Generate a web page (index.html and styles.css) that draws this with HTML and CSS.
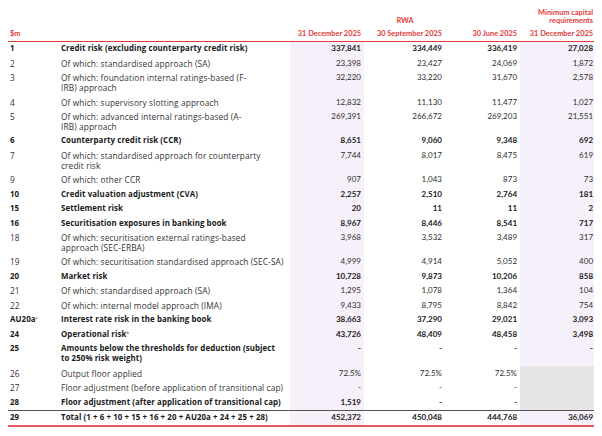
FILE: index.html
```html
<!DOCTYPE html>
<html>
<head>
<meta charset="utf-8">
<link rel="stylesheet" href="styles.css">
</head>
<body>
<table class="rwa">
  <colgroup>
    <col class="c-num"><col class="c-desc"><col class="c-v1"><col class="c-v2"><col class="c-v3"><col class="c-v4">
  </colgroup>
  <thead>
    <tr class="h1">
      <th></th><th></th>
      <th colspan="3" class="center">RWA</th>
      <th class="right">Minimum capital<br>requirements</th>
    </tr>
    <tr class="h2">
      <th class="left">$m</th><th></th>
      <th class="right">31 December 2025</th>
      <th class="right">30 September 2025</th>
      <th class="right">30 June 2025</th>
      <th class="right">31 December 2025</th>
    </tr>
  </thead>
  <tbody>
    <tr class="b"><td>1</td><td>Credit risk (excluding counterparty credit risk)</td><td class="v s">337,841</td><td class="v">334,449</td><td class="v">336,419</td><td class="v s">27,028</td></tr>
    <tr><td>2</td><td>Of which: standardised approach (SA)</td><td class="v s">23,398</td><td class="v">23,427</td><td class="v">24,069</td><td class="v s">1,872</td></tr>
    <tr><td>3</td><td>Of which: foundation internal ratings-based (F-<br>IRB) approach</td><td class="v s">32,220</td><td class="v">33,220</td><td class="v">31,670</td><td class="v s">2,578</td></tr>
    <tr><td>4</td><td>Of which: supervisory slotting approach</td><td class="v s">12,832</td><td class="v">11,130</td><td class="v">11,477</td><td class="v s">1,027</td></tr>
    <tr><td>5</td><td>Of which: advanced internal ratings-based (A-<br>IRB) approach</td><td class="v s">269,391</td><td class="v">266,672</td><td class="v">269,203</td><td class="v s">21,551</td></tr>
    <tr class="b"><td>6</td><td>Counterparty credit risk (CCR)</td><td class="v s">8,651</td><td class="v">9,060</td><td class="v">9,348</td><td class="v s">692</td></tr>
    <tr><td>7</td><td>Of which: standardised approach for counterparty<br>credit risk</td><td class="v s">7,744</td><td class="v">8,017</td><td class="v">8,475</td><td class="v s">619</td></tr>
    <tr><td>9</td><td>Of which: other CCR</td><td class="v s">907</td><td class="v">1,043</td><td class="v">873</td><td class="v s">73</td></tr>
    <tr class="b"><td>10</td><td>Credit valuation adjustment (CVA)</td><td class="v s">2,257</td><td class="v">2,510</td><td class="v">2,764</td><td class="v s">181</td></tr>
    <tr class="b"><td>15</td><td>Settlement risk</td><td class="v s">20</td><td class="v">11</td><td class="v">11</td><td class="v s">2</td></tr>
    <tr class="b"><td>16</td><td>Securitisation exposures in banking book</td><td class="v s">8,967</td><td class="v">8,446</td><td class="v">8,541</td><td class="v s">717</td></tr>
    <tr><td>18</td><td>Of which: securitisation external ratings-based<br>approach (SEC-ERBA)</td><td class="v s">3,968</td><td class="v">3,532</td><td class="v">3,489</td><td class="v s">317</td></tr>
    <tr><td>19</td><td>Of which: securitisation standardised approach (SEC-SA)</td><td class="v s">4,999</td><td class="v">4,914</td><td class="v">5,052</td><td class="v s">400</td></tr>
    <tr class="b"><td>20</td><td>Market risk</td><td class="v s">10,728</td><td class="v">9,873</td><td class="v">10,206</td><td class="v s">858</td></tr>
    <tr><td>21</td><td>Of which: standardised approach (SA)</td><td class="v s">1,295</td><td class="v">1,078</td><td class="v">1,364</td><td class="v s">104</td></tr>
    <tr><td>22</td><td>Of which: internal model approach (IMA)</td><td class="v s">9,433</td><td class="v">8,795</td><td class="v">8,842</td><td class="v s">754</td></tr>
    <tr class="b"><td>AU20a<sup>a</sup></td><td>Interest rate risk in the banking book</td><td class="v s">38,663</td><td class="v">37,290</td><td class="v">29,021</td><td class="v s">3,093</td></tr>
    <tr class="b"><td>24</td><td>Operational risk<sup>b</sup></td><td class="v s">43,726</td><td class="v">48,409</td><td class="v">48,458</td><td class="v s">3,498</td></tr>
    <tr class="b"><td>25</td><td>Amounts below the thresholds for deduction (subject<br>to 250% risk weight)</td><td class="v s">-</td><td class="v">-</td><td class="v">-</td><td class="v s">-</td></tr>
    <tr><td>26</td><td>Output floor applied</td><td class="v s">72.5%</td><td class="v">72.5%</td><td class="v">72.5%</td><td class="v g"></td></tr>
    <tr><td>27</td><td>Floor adjustment (before application of transitional cap)</td><td class="v s">-</td><td class="v">-</td><td class="v">-</td><td class="v g"></td></tr>
    <tr class="b"><td>28</td><td>Floor adjustment (after application of transitional cap)</td><td class="v s">1,519</td><td class="v">-</td><td class="v">-</td><td class="v g"></td></tr>
    <tr class="b total"><td>29</td><td>Total (1 + 6 + 10 + 15 + 16 + 20 + AU20a + 24 + 25 + 28)</td><td class="v s">452,372</td><td class="v">450,048</td><td class="v">444,768</td><td class="v s">36,069</td></tr>
  </tbody>
</table>
</body>
</html>
```

FILE: styles.css
```css
html, body {
  background: #ffffff;
}
body {
  margin: 8px;
  font-family: "Lato", "Liberation Sans", sans-serif;
  color: #3c3c3c;
}
.rwa {
  border-collapse: collapse;
  table-layout: fixed;
  width: 588px;
}
.c-num { width: 50px; }
.c-desc { width: 232px; }
.c-v1 { width: 74px; }
.c-v2 { width: 81px; }
.c-v3 { width: 75px; }
.c-v4 { width: 76px; }

.rwa th {
  color: #e23b3b;
  font-weight: 700;
  font-size: 7.4px;
  line-height: 8px;
  padding: 0 3px;
  vertical-align: bottom;
  text-align: left;
}
.rwa .h1 th {
  padding-top: 0.5px;
  padding-bottom: 2px;
}
.rwa .h2 th {
  padding-top: 3.25px;
  padding-bottom: 3.25px;
  border-bottom: 1.5px solid #e23b3b;
}
.rwa .h2 th.left { padding-left: 2px; }
.rwa th.center { text-align: center; }
.rwa th.right { text-align: right; }

.rwa td {
  font-family: "Open Sans", "Noto Sans", sans-serif;
  font-size: 8.3px;
  font-weight: 500;
  letter-spacing: 0.12px;
  line-height: 9.8px;
  padding: 2.35px 3px;
  vertical-align: top;
  white-space: nowrap;
  color: #333333;
}
.rwa td:first-child { padding-left: 2px; }
.rwa td.v {
  font-family: "Lato", "Liberation Sans", sans-serif;
  text-align: right;
  font-size: 8px;
  letter-spacing: 0;
  font-weight: 400;
  color: #2e2e2e;
}
.rwa td.s { background: #f6f0fb; }
.rwa td.g { background: #e6e6e6; }
.rwa tr.b td {
  font-size: 7.9px;
  font-weight: 700;
  letter-spacing: 0.08px;
  color: #1a1a1a;
}
.rwa tr.b td.v {
  font-size: 8px;
  letter-spacing: 0;
}
.rwa sup {
  font-size: 4px;
  line-height: 0;
  vertical-align: 3px;
  font-weight: 400;
}
.rwa tr.total td {
  border-top: 1px solid #555555;
  border-bottom: 2px solid #e25a5a;
  padding-top: 2.5px;
  padding-bottom: 2.5px;
}
```
